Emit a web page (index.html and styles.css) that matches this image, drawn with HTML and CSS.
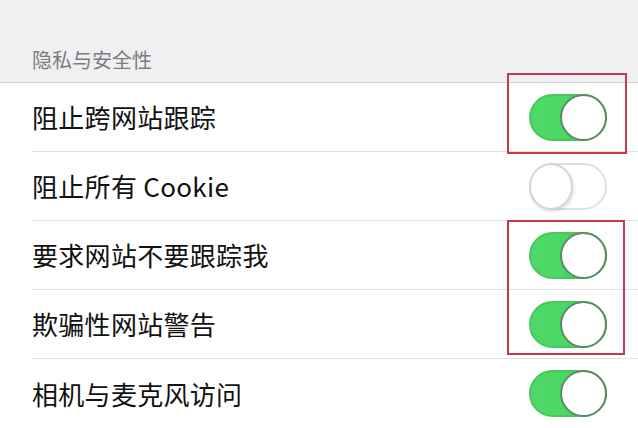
FILE: index.html
```html
<!DOCTYPE html>
<html lang="zh-CN">
<head>
  <meta charset="UTF-8">
  <title>隐私与安全性</title>
  <link rel="stylesheet" href="styles.css">
</head>
<body>
  <div class="section-head">隐私与安全性</div>

  <div class="list">
    <div class="row">
      <span class="label">阻止跨网站跟踪</span>
      <span class="switch on"><span class="knob"></span></span>
    </div>
    <div class="row">
      <span class="label">阻止所有 Cookie</span>
      <span class="switch"><span class="knob"></span></span>
    </div>
    <div class="row">
      <span class="label">要求网站不要跟踪我</span>
      <span class="switch on"><span class="knob"></span></span>
    </div>
    <div class="row">
      <span class="label">欺骗性网站警告</span>
      <span class="switch on"><span class="knob"></span></span>
    </div>
    <div class="row last">
      <span class="label">相机与麦克风访问</span>
      <span class="switch on"><span class="knob"></span></span>
    </div>

    <!-- red marks drawn over the screenshot -->
    <div class="mark mark-one"></div>
    <div class="mark mark-two"></div>
  </div>
</body>
</html>
```

FILE: styles.css
```css
body {
  margin: 0;
  background-color: #ffffff;
  font-family: "Noto Sans CJK SC", "Noto Sans", sans-serif;
  color: #111111;
  overflow: hidden;
}
.section-head {
  height: 83px;
  box-sizing: border-box;
  padding: 47px 0 0 32px;
  background-color: #f0f0f2;
  border-bottom: 1px solid #d4d4d6;
  color: #7c7c80;
  font-size: 20px;
  line-height: 26px;
}
.list {
  position: relative;
}
.row {
  display: flex;
  align-items: center;
  justify-content: space-between;
  height: 69px;
  margin-left: 32px;
  padding-right: 31px;
  border-bottom: 1px solid #e2e2e4;
  box-sizing: border-box;
}
.row.last {
  border-bottom: none;
}
.label {
  font-size: 26px;
  line-height: 30px;
  letter-spacing: 0.3px;
}
.switch {
  position: relative;
  width: 78px;
  height: 47px;
  border-radius: 24px;
  box-sizing: border-box;
  border: 2px solid #e0e0e0;
  background-color: #ffffff;
}
.switch .knob {
  position: absolute;
  top: -2px;
  left: -2px;
  width: 44px;
  height: 47px;
  box-sizing: border-box;
  border-radius: 50%;
  background-color: #ffffff;
  border: 2px solid #d6d6d6;
  box-shadow: 1px 2px 3px rgba(0, 0, 0, 0.12);
}
.switch.on {
  border-color: #46c85c;
  background: linear-gradient(90deg, #4fd868 0%, #4cd864 45%, #3bb552 100%);
}
.switch.on .knob {
  left: auto;
  right: -2px;
  width: 47px;
  border-color: #5a8a66;
  box-shadow: none;
}
.mark {
  position: absolute;
  border: 2px solid #c9394d;
}
.mark-one {
  left: 507px;
  top: -10px;
  width: 116px;
  height: 77px;
}
.mark-two {
  left: 507px;
  top: 137px;
  width: 114px;
  height: 131px;
}
```
